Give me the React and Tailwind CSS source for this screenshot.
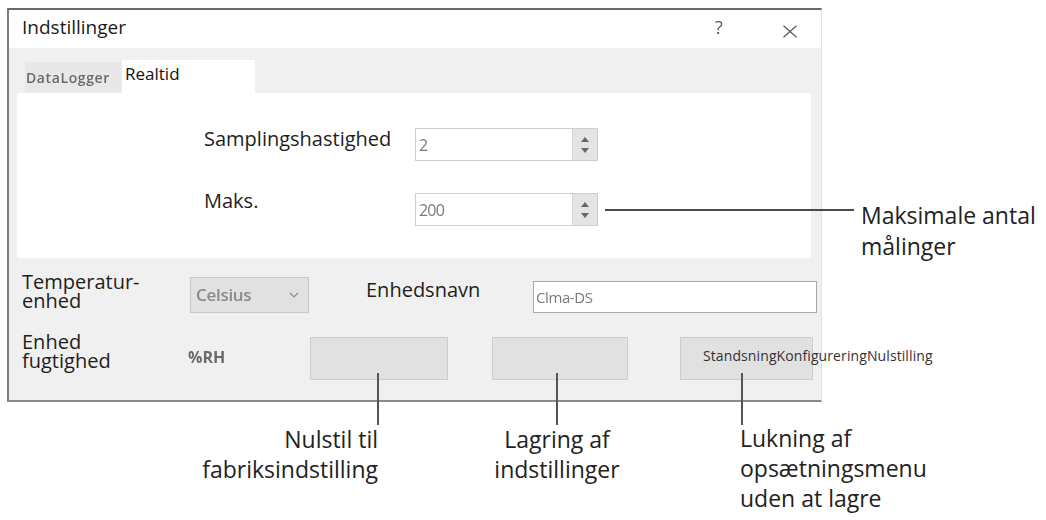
import React from "react";

function SpinBox({ value }) {
  return (
    <div className="w-[183px] h-[33px] flex border border-[#cfcfcf] bg-white">
      <div className="flex-1 flex items-center pl-[3px] text-[16px] tracking-[-0.8px] text-[#7a7a7a] blur-[0.4px]">{value}</div>
      <div className="w-[25px] bg-[#e4e4e4] border-l border-[#d6d6d6] flex flex-col items-center justify-center gap-[4px]">
        <svg width="10" height="7" viewBox="0 0 10 7"><path d="M1 6 L5 1 L9 6Z" fill="#666" /></svg>
        <svg width="10" height="7" viewBox="0 0 10 7"><path d="M1 1 L5 6 L9 1Z" fill="#666" /></svg>
      </div>
    </div>
  );
}

export default function App() {
  return (
    <div className="relative w-[1046px] h-[520px] bg-white overflow-hidden font-['Open_Sans',sans-serif] text-[#1e1e1e]">
      <div className="pt-[8px] pl-[7px]">
        <div className="w-[815px] h-[394px] flex flex-col border-t-2 border-l-2 border-b-2 border-r border-t-[#6a6a6a] border-l-[#7d7d7d] border-b-[#8a8a8a] border-r-[#e4e4e4] bg-[#f0f0f0]">
          {/* title bar */}
          <div className="h-[38px] shrink-0 bg-white flex items-start pt-[5px] pl-[13px]">
            <span className="text-[19px] leading-[24px] text-[#1a1a1a]">Indstillinger</span>
            <span className="ml-auto w-[10px] text-[18px] leading-[24px] text-[#5a5a5a] blur-[0.3px]">?</span>
            <svg className="ml-[57px] mr-[23px] mt-[10px]" width="16" height="13" viewBox="0 0 16 13">
              <path d="M1.5 0.8 L14.5 12.2 M14.5 0.8 L1.5 12.2" stroke="#5c5c5c" strokeWidth="1.3" fill="none" />
            </svg>
          </div>

          {/* tab strip */}
          <div className="h-[45px] shrink-0 flex items-end pl-[16px]">
            <div className="w-[97px] h-[30px] mb-[1px] bg-[#e8e8e8] flex items-center pl-[1px]">
              <span className="text-[14px] font-semibold tracking-[0.6px] text-[#6a6a6a] blur-[0.5px]">DataLogger</span>
            </div>
            <div className="w-[133px] h-[33px] bg-white pt-[2px] pl-[3px]">
              <span className="text-[17px] leading-[22px] text-[#111]">Realtid</span>
            </div>
          </div>

          {/* panel */}
          <div className="ml-[8px] w-[794px] h-[165px] shrink-0 bg-white pt-[35px] pl-[187px]">
            <div className="flex items-start">
              <div className="w-[211px] text-[20px] leading-[24px] -mt-[1px]">Samplingshastighed</div>
              <SpinBox value="2" />
            </div>
            <div className="flex items-start mt-[32px]">
              <div className="w-[211px] text-[20px] leading-[24px] -mt-[4px]">Maks.</div>
              <SpinBox value="200" />
            </div>
          </div>

          {/* bottom section */}
          <div className="flex-1 pl-[13px] pt-[14px]">
            <div className="flex items-start">
              <div className="w-[168px] text-[20px] leading-[19px]">
                Temperatur-
                <br />
                enhed
              </div>
              <div className="mt-[5px] w-[119px] h-[36px] bg-[#e1e1e1] border border-[#c8c8c8] flex items-center pl-[5px]">
                <span className="text-[17px] font-semibold tracking-[-0.3px] text-[#8a8a8a] blur-[0.5px]">Celsius</span>
                <svg className="ml-auto mr-[9px]" width="10" height="6" viewBox="0 0 10 6">
                  <path d="M1 1 L5 5 L9 1" stroke="#8a8a8a" strokeWidth="1.2" fill="none" />
                </svg>
              </div>
              <div className="ml-[57px] w-[167px] mt-[6px] text-[20px] leading-[24px]">Enhedsnavn</div>
              <div className="mt-[9px] w-[284px] h-[32px] bg-white border border-[#a9a9a9] pl-[2px] flex items-center">
                <span className="text-[15px] text-[#7a7a7a] tracking-[-0.4px] blur-[0.4px]">Clma-DS</span>
              </div>
            </div>
            <div className="flex items-start mt-[19px]">
              <div className="w-[166px] text-[20px] leading-[19px]">
                Enhed
                <br />
                fugtighed
              </div>
              <div className="w-[122px] mt-[14px] text-[16px] leading-[22px] font-bold text-[#6a6a6a] blur-[0.4px]">%RH</div>
              <div className="mt-[5px] w-[138px] h-[43px] bg-[#e1e1e1] border border-[#cdcdcd]" />
              <div className="ml-[44px] mt-[5px] w-[136px] h-[43px] bg-[#e1e1e1] border border-[#cdcdcd]" />
              <div className="ml-[52px] mt-[5px] w-[133px] h-[43px] bg-[#e1e1e1] border border-[#cdcdcd] pl-[22px] pt-[5px] whitespace-nowrap overflow-visible">
                <span className="text-[14px] leading-[17px] text-[#333] tracking-[0.1px]">StandsningKonfigureringNulstilling</span>
              </div>
            </div>
          </div>
        </div>
      </div>

      {/* callout lines */}
      <div className="absolute left-[605px] top-[209px] w-[249px] h-[2px] bg-[#4a4a4a]" />
      <div className="absolute left-[377px] top-[373px] w-[2px] h-[52px] bg-[#555]" />
      <div className="absolute left-[556px] top-[373px] w-[2px] h-[52px] bg-[#555]" />
      <div className="absolute left-[741px] top-[373px] w-[2px] h-[52px] bg-[#555]" />

      {/* callout texts */}
      <div className="absolute left-[861px] top-[200px] text-[23px] leading-[31px] text-[#222]">
        Maksimale antal
        <br />
        målinger
      </div>
      <div className="absolute left-[128px] w-[250px] top-[424px] text-right text-[23px] leading-[30px] text-[#222]">
        Nulstil til
        <br />
        fabriksindstilling
      </div>
      <div className="absolute left-[432px] w-[250px] top-[424px] text-center text-[23px] leading-[30px] text-[#222]">
        Lagring af
        <br />
        indstillinger
      </div>
      <div className="absolute left-[740px] top-[423px] text-[23px] leading-[30px] text-[#222]">
        Lukning af
        <br />
        opsætningsmenu
        <br />
        uden at lagre
      </div>
    </div>
  );
}
